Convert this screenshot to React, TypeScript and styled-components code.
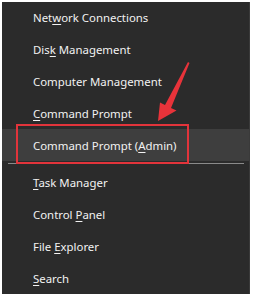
import styled, { createGlobalStyle } from "styled-components";

const Global = createGlobalStyle`
  body {
    margin: 0;
    background: #ffffff;
    font-family: "Noto Sans", "Open Sans", sans-serif;
  }
`;

const Panel = styled.div`
  position: relative;
  margin: 2px 3px 0 2px;
  width: 248px;
  height: 292px;
  background: #2b2b2b;
  border-right: 1px solid #3a3a3a;
  box-sizing: border-box;
  display: flex;
  flex-direction: column;
`;

const Item = styled.div<{ $active?: boolean }>`
  height: 32px;
  display: flex;
  align-items: center;
  padding-left: 31px;
  font-size: 11.4px;
  color: #f2f2f2;
  background: ${(p) => (p.$active ? "#3e3e3e" : "transparent")};
  white-space: pre;
`;

const Key = styled.span`
  text-decoration: underline;
  text-underline-offset: 2px;
`;

const Separator = styled.div`
  height: 6px;
  display: flex;
  align-items: center;
  padding: 0 5px 0 6px;

  &::after {
    content: "";
    flex: 1;
    height: 1px;
    background: #8a8a8a;
  }
`;

const Highlight = styled.div`
  position: absolute;
  left: 14px;
  top: 122px;
  width: 173px;
  height: 40px;
  border: 2px solid #e2343b;
  box-sizing: border-box;
`;

const Arrow = styled.svg`
  position: absolute;
  left: 150px;
  top: 55px;
`;

export default function App() {
  return (
    <>
      <Global />
      <Panel>
        <Item>
          <span>
            Net<Key>w</Key>ork Connections
          </span>
        </Item>
        <Item>
          <span>
            Dis<Key>k</Key> Management
          </span>
        </Item>
        <Item>
          <span>Computer Management</span>
        </Item>
        <Item>
          <span>
            <Key>C</Key>ommand Prompt
          </span>
        </Item>
        <Item $active>
          <span>
            Command Prompt (<Key>A</Key>dmin)
          </span>
        </Item>
        <Separator />
        <Item>
          <span>
            <Key>T</Key>ask Manager
          </span>
        </Item>
        <Item>
          <span>
            Control <Key>P</Key>anel
          </span>
        </Item>
        <Item>
          <span>
            File <Key>E</Key>xplorer
          </span>
        </Item>
        <Item>
          <span>
            <Key>S</Key>earch
          </span>
        </Item>
        <Highlight />
        <Arrow width="45" height="68" viewBox="0 0 45 68">
          <path
            d="M37.5 6 L19 51 L24.5 53.5 L6 64 L8 45.5 L13 48 L36 5 Z"
            fill="#e8333a"
          />
        </Arrow>
      </Panel>
    </>
  );
}
